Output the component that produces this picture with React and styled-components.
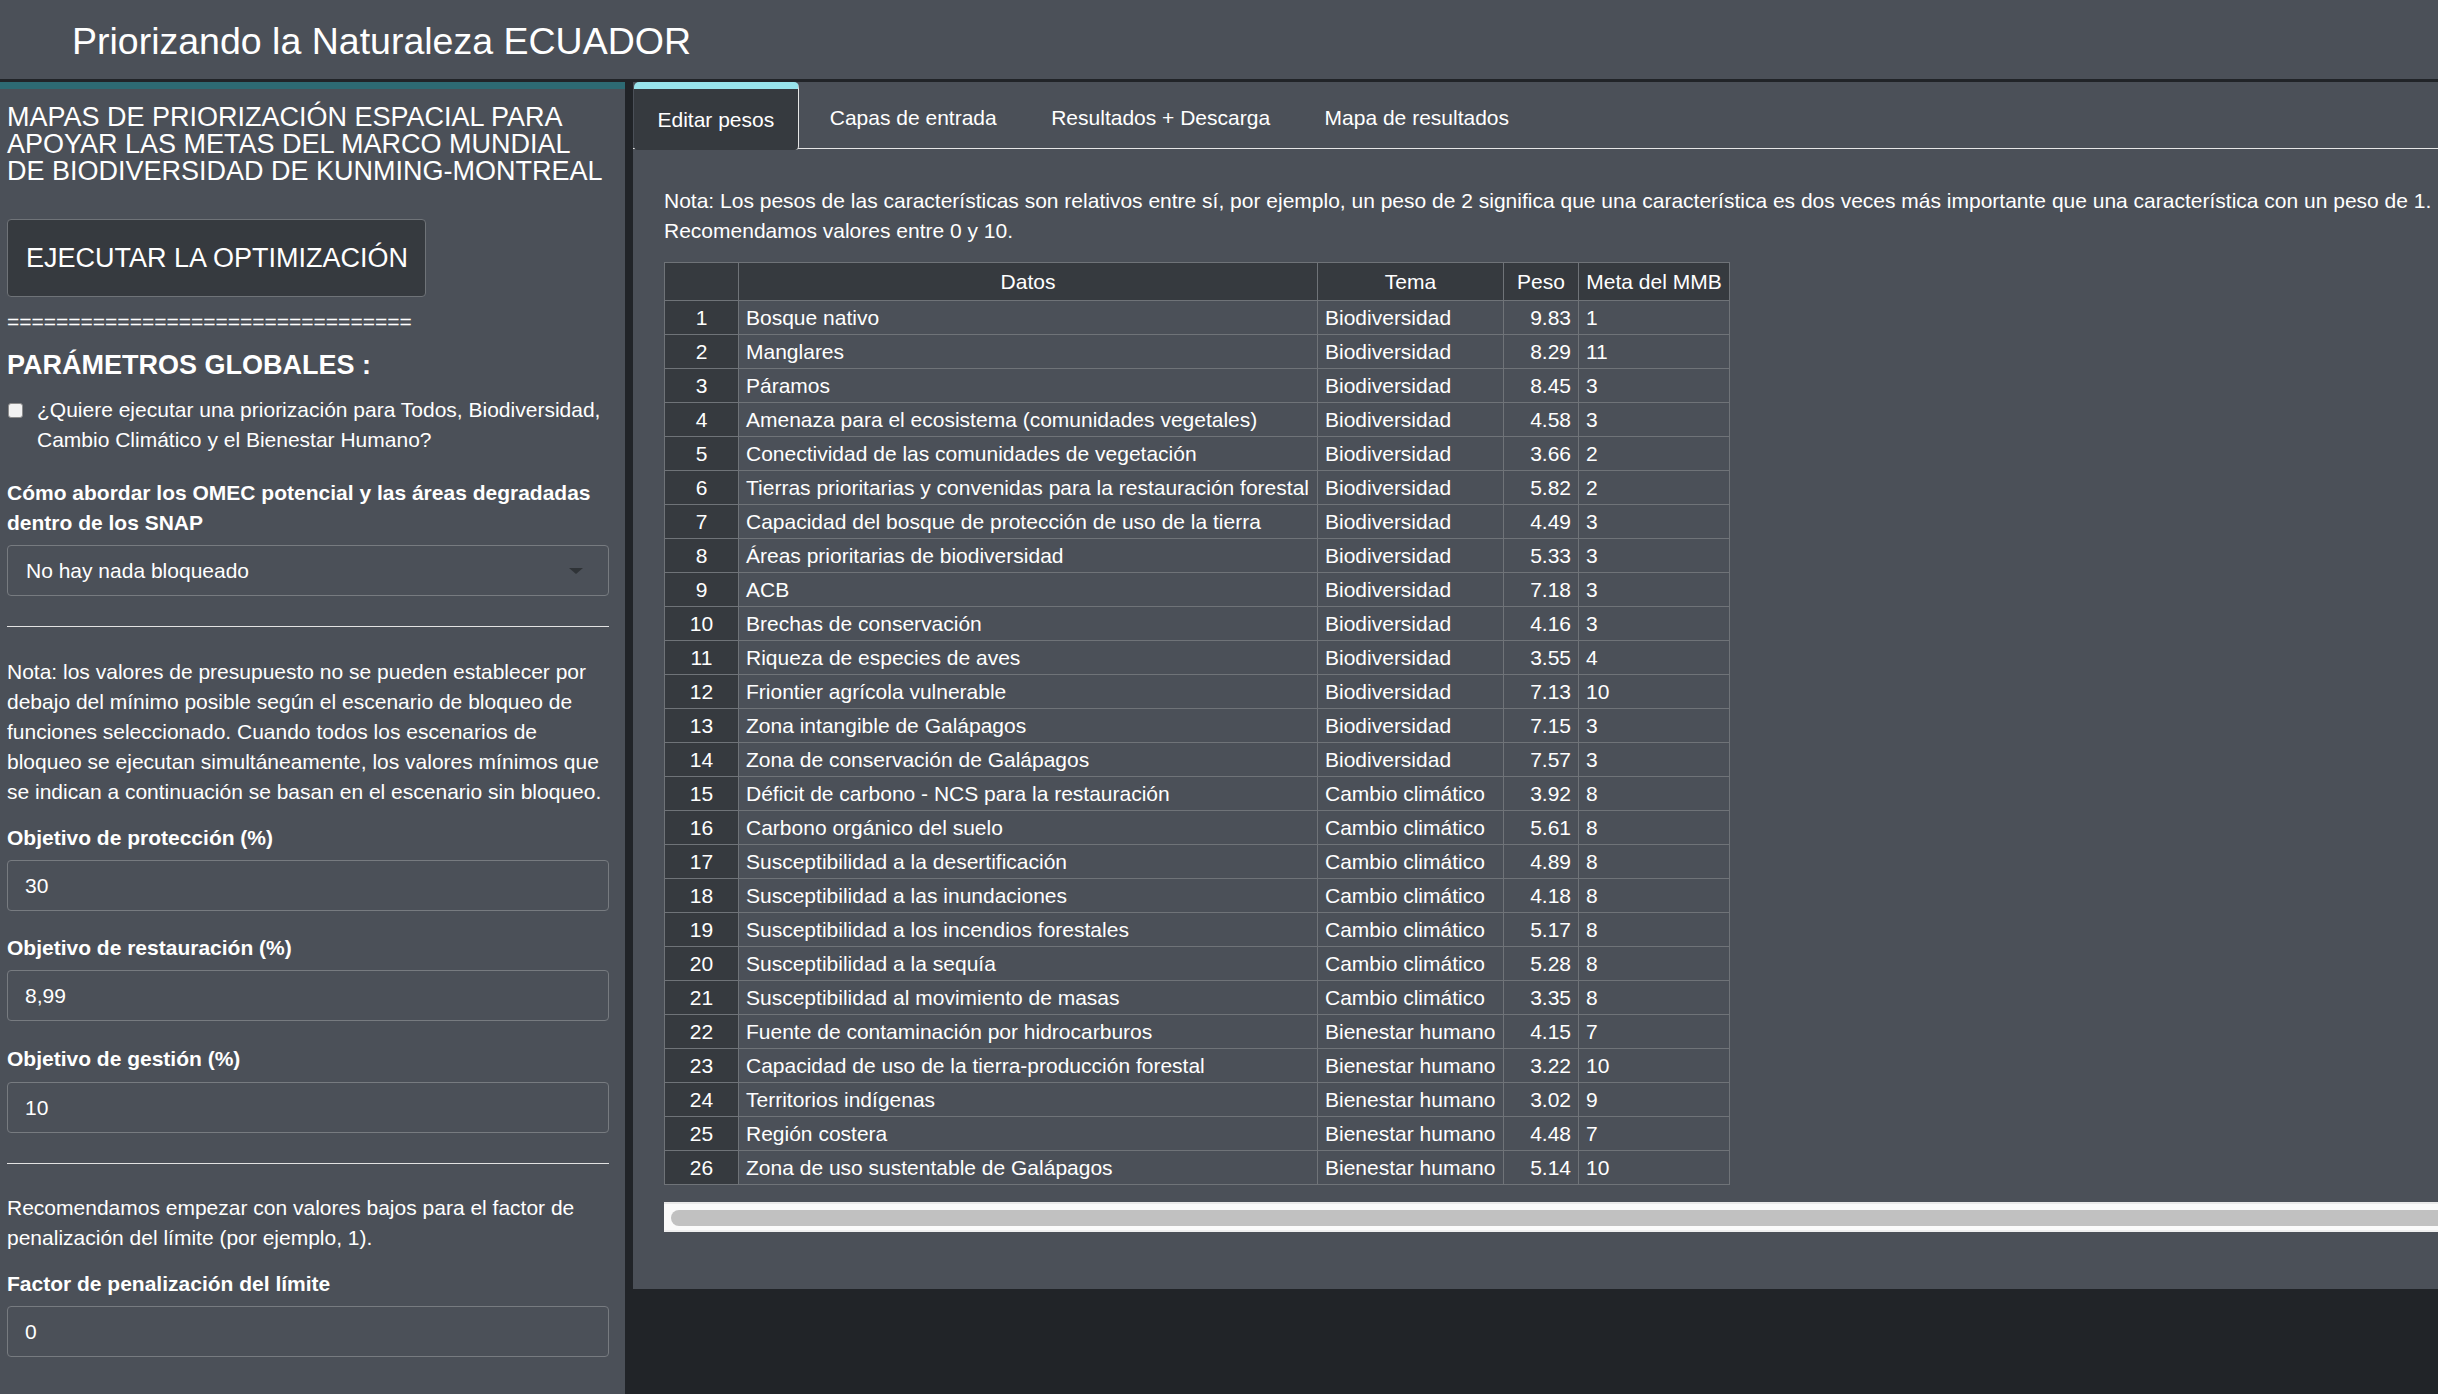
import React from "react";
import styled, { createGlobalStyle } from "styled-components";

const GlobalStyle = createGlobalStyle`
  html, body {
    margin: 0;
    padding: 0;
    overflow: hidden;
    background: #212428;
  }
  body {
    font-family: "Liberation Sans", Arial, Helvetica, sans-serif;
    font-size: 21px;
    line-height: 30px;
    color: #ffffff;
  }
  * {
    box-sizing: border-box;
  }
`;

const PANEL = "#4b5058";
const DARK = "#363a3f";
const LINE = "#6f7378";

const rows = [
  ["Bosque nativo", "Biodiversidad", "9.83", "1"],
  ["Manglares", "Biodiversidad", "8.29", "11"],
  ["Páramos", "Biodiversidad", "8.45", "3"],
  ["Amenaza para el ecosistema (comunidades vegetales)", "Biodiversidad", "4.58", "3"],
  ["Conectividad de las comunidades de vegetación", "Biodiversidad", "3.66", "2"],
  ["Tierras prioritarias y convenidas para la restauración forestal", "Biodiversidad", "5.82", "2"],
  ["Capacidad del bosque de protección de uso de la tierra", "Biodiversidad", "4.49", "3"],
  ["Áreas prioritarias de biodiversidad", "Biodiversidad", "5.33", "3"],
  ["ACB", "Biodiversidad", "7.18", "3"],
  ["Brechas de conservación", "Biodiversidad", "4.16", "3"],
  ["Riqueza de especies de aves", "Biodiversidad", "3.55", "4"],
  ["Friontier agrícola vulnerable", "Biodiversidad", "7.13", "10"],
  ["Zona intangible de Galápagos", "Biodiversidad", "7.15", "3"],
  ["Zona de conservación de Galápagos", "Biodiversidad", "7.57", "3"],
  ["Déficit de carbono - NCS para la restauración", "Cambio climático", "3.92", "8"],
  ["Carbono orgánico del suelo", "Cambio climático", "5.61", "8"],
  ["Susceptibilidad a la desertificación", "Cambio climático", "4.89", "8"],
  ["Susceptibilidad a las inundaciones", "Cambio climático", "4.18", "8"],
  ["Susceptibilidad a los incendios forestales", "Cambio climático", "5.17", "8"],
  ["Susceptibilidad a la sequía", "Cambio climático", "5.28", "8"],
  ["Susceptibilidad al movimiento de masas", "Cambio climático", "3.35", "8"],
  ["Fuente de contaminación por hidrocarburos", "Bienestar humano", "4.15", "7"],
  ["Capacidad de uso de la tierra-producción forestal", "Bienestar humano", "3.22", "10"],
  ["Territorios indígenas", "Bienestar humano", "3.02", "9"],
  ["Región costera", "Bienestar humano", "4.48", "7"],
  ["Zona de uso sustentable de Galápagos", "Bienestar humano", "5.14", "10"],
];

const tabs = ["Editar pesos", "Capas de entrada", "Resultados + Descarga", "Mapa de resultados"];

const Page = styled.div`
  width: 2438px;
  height: 1394px;
  overflow: hidden;
  display: flex;
  flex-direction: column;
`;

const Header = styled.header`
  height: 79px;
  flex-shrink: 0;
  background: ${PANEL};
  display: flex;
  align-items: center;
  padding: 4px 0 0 72px;
`;

const Title = styled.h1`
  margin: 0;
  font-size: 37.5px;
  line-height: 1;
  font-weight: 400;
`;

const Body = styled.div`
  flex: 1;
  margin-top: 3px;
  display: grid;
  grid-template-columns: 625px 1fr;
  column-gap: 8px;
  align-items: start;
  min-height: 0;
`;

const Sidebar = styled.aside`
  align-self: stretch;
  background: ${PANEL};
  border-top: 7px solid #2d6a73;
  padding: 0 16px 0 7px;
  overflow: hidden;
`;

const SideHeading = styled.h4`
  margin: 15px 0 0;
  font-size: 27px;
  line-height: 27px;
  font-weight: 400;
`;

const RunButton = styled.button`
  display: flex;
  align-items: center;
  margin-top: 34px;
  width: 419px;
  height: 78px;
  padding: 0 18px;
  background: ${DARK};
  border: 1px solid ${LINE};
  border-radius: 4px;
  color: #ffffff;
  font-family: inherit;
  font-size: 27px;
  white-space: nowrap;
`;

const Equals = styled.div`
  margin-top: 10px;
  white-space: nowrap;
`;

const SectionTitle = styled.h4`
  margin: 13px 0 0;
  font-size: 27px;
  line-height: 30px;
  font-weight: 700;
`;

const CheckRow = styled.label`
  display: flex;
  align-items: flex-start;
  gap: 14px;
  margin-top: 15px;
  padding-left: 1px;
`;

const CheckBox = styled.input.attrs({ type: "checkbox" })`
  appearance: none;
  flex-shrink: 0;
  margin: 8px 0 0;
  width: 15px;
  height: 15px;
  background: #f2f2f2;
  border: 1px solid #8c8c8c;
  border-radius: 3px;
`;

const FieldLabel = styled.div`
  margin-top: ${(p) => p.$mt ?? 22}px;
  font-weight: 700;
`;

const SelectBox = styled.div`
  display: flex;
  align-items: center;
  justify-content: space-between;
  margin-top: 7px;
  height: 51px;
  padding: 0 25px 0 18px;
  border: 1px solid #777b80;
  border-radius: 4px;
  background: ${PANEL};
`;

const Caret = styled.span`
  width: 0;
  height: 0;
  border-left: 7.5px solid transparent;
  border-right: 7.5px solid transparent;
  border-top: 6px solid #2f3337;
`;

const Rule = styled.hr`
  margin: 30px 0 0;
  border: 0;
  border-top: 1px solid #e2e2e2;
`;

const Note = styled.p`
  margin: ${(p) => p.$mt ?? 30}px 0 0;
`;

const TextInput = styled.input`
  display: block;
  width: 100%;
  margin-top: ${(p) => p.$mt ?? 7}px;
  height: 51px;
  padding: 0 17px;
  border: 1px solid #777b80;
  border-radius: 4px;
  background: ${PANEL};
  color: #ffffff;
  font-family: inherit;
  font-size: 21px;
`;

const MainPanel = styled.main`
  background: ${PANEL};
  padding-bottom: 57px;
  min-width: 0;
`;

const TabBar = styled.nav`
  display: flex;
  align-items: flex-start;
  height: 67px;
  border-bottom: 1px solid #e6e6e6;
  padding-left: 1px;
`;

const Tab = styled.div`
  display: flex;
  align-items: center;
  margin-right: 7.5px;
  padding: ${(p) => (p.$active ? "0 23.5px" : "5px 23.5px 0")};
  white-space: nowrap;
  height: ${(p) => (p.$active ? 68 : 66)}px;
  background: ${(p) => (p.$active ? DARK : "transparent")};
  border-top: ${(p) => (p.$active ? "7px solid #98e4ec" : "0")};
  border-right: ${(p) => (p.$active ? "1px solid #e6e6e6" : "0")};
  border-radius: ${(p) => (p.$active ? "5px 5px 4px 4px" : "0")};
  position: relative;
  z-index: 1;
`;

const Content = styled.section`
  padding-left: 31px;
`;

const Intro = styled.p`
  margin: 37px 0 0;
  white-space: nowrap;
`;

const Grid = styled.table`
  margin-top: 16px;
  border-collapse: collapse;
  table-layout: fixed;
  width: 1066px;
`;

const HeadCell = styled.th`
  height: 38px;
  padding: 0 6px;
  background: ${DARK};
  border: 1px solid ${LINE};
  font-weight: 400;
  text-align: center;
  white-space: nowrap;
  line-height: 1;
`;

const RowHead = styled.th`
  height: 34px;
  padding: 0;
  background: ${DARK};
  border: 1px solid ${LINE};
  font-weight: 400;
  text-align: center;
  line-height: 1;
`;

const Cell = styled.td`
  height: 34px;
  padding: 0 7px;
  border: 1px solid ${LINE};
  text-align: ${(p) => (p.$num ? "right" : "left")};
  white-space: nowrap;
  overflow: hidden;
  line-height: 1;
`;

const ScrollTrack = styled.div`
  margin-top: 17px;
  height: 30px;
  padding: 6px 0 4px 7px;
  background: #fafafa;
  border-top: 2px solid #e9e9e9;
  border-bottom: 2px solid #efefef;
`;

const ScrollThumb = styled.div`
  height: 16px;
  border-radius: 8px 0 0 8px;
  background: #c1c1c1;
`;

export default function App() {
  return (
    <Page>
      <GlobalStyle />
      <Header>
        <Title>Priorizando la Naturaleza ECUADOR</Title>
      </Header>
      <Body>
        <Sidebar>
          <SideHeading>
            MAPAS DE PRIORIZACIÓN ESPACIAL PARA
            <br />
            APOYAR LAS METAS DEL MARCO MUNDIAL
            <br />
            DE BIODIVERSIDAD DE KUNMING-MONTREAL
          </SideHeading>
          <RunButton>EJECUTAR LA OPTIMIZACIÓN</RunButton>
          <Equals>{"=".repeat(33)}</Equals>
          <SectionTitle>PARÁMETROS GLOBALES :</SectionTitle>
          <CheckRow>
            <CheckBox />
            <span>
              ¿Quiere ejecutar una priorización para Todos, Biodiversidad,
              Cambio Climático y el Bienestar Humano?
            </span>
          </CheckRow>
          <FieldLabel $mt={23}>
            Cómo abordar los OMEC potencial y las áreas degradadas dentro de los SNAP
          </FieldLabel>
          <SelectBox>
            <span>No hay nada bloqueado</span>
            <Caret />
          </SelectBox>
          <Rule />
          <Note>
            Nota: los valores de presupuesto no se pueden establecer por debajo
            del mínimo posible según el escenario de bloqueo de funciones
            seleccionado. Cuando todos los escenarios de bloqueo se ejecutan
            simultáneamente, los valores mínimos que se indican a continuación
            se basan en el escenario sin bloqueo.
          </Note>
          <FieldLabel $mt={16}>Objetivo de protección (%)</FieldLabel>
          <TextInput defaultValue="30" />
          <FieldLabel $mt={22}>Objetivo de restauración (%)</FieldLabel>
          <TextInput defaultValue="8,99" />
          <FieldLabel $mt={23}>Objetivo de gestión (%)</FieldLabel>
          <TextInput $mt={8} defaultValue="10" />
          <Rule />
          <Note $mt={29}>
            Recomendamos empezar con valores bajos para el factor de
            penalización del límite (por ejemplo, 1).
          </Note>
          <FieldLabel $mt={16}>Factor de penalización del límite</FieldLabel>
          <TextInput defaultValue="0" />
        </Sidebar>

        <MainPanel>
          <TabBar>
            {tabs.map((t, i) => (
              <Tab key={t} $active={i === 0}>
                {t}
              </Tab>
            ))}
          </TabBar>
          <Content>
            <Intro>
              Nota: Los pesos de las características son relativos entre sí, por
              ejemplo, un peso de 2 significa que una característica es dos veces
              más importante que una característica con un peso de 1.
              <br />
              Recomendamos valores entre 0 y 10.
            </Intro>
            <Grid>
              <colgroup>
                <col style={{ width: 74 }} />
                <col style={{ width: 579 }} />
                <col style={{ width: 186 }} />
                <col style={{ width: 75 }} />
                <col style={{ width: 151 }} />
              </colgroup>
              <thead>
                <tr>
                  <HeadCell />
                  <HeadCell>Datos</HeadCell>
                  <HeadCell>Tema</HeadCell>
                  <HeadCell>Peso</HeadCell>
                  <HeadCell>Meta del MMB</HeadCell>
                </tr>
              </thead>
              <tbody>
                {rows.map((r, i) => (
                  <tr key={i}>
                    <RowHead>{i + 1}</RowHead>
                    <Cell>{r[0]}</Cell>
                    <Cell>{r[1]}</Cell>
                    <Cell $num>{r[2]}</Cell>
                    <Cell>{r[3]}</Cell>
                  </tr>
                ))}
              </tbody>
            </Grid>
            <ScrollTrack>
              <ScrollThumb />
            </ScrollTrack>
          </Content>
        </MainPanel>
      </Body>
    </Page>
  );
}
